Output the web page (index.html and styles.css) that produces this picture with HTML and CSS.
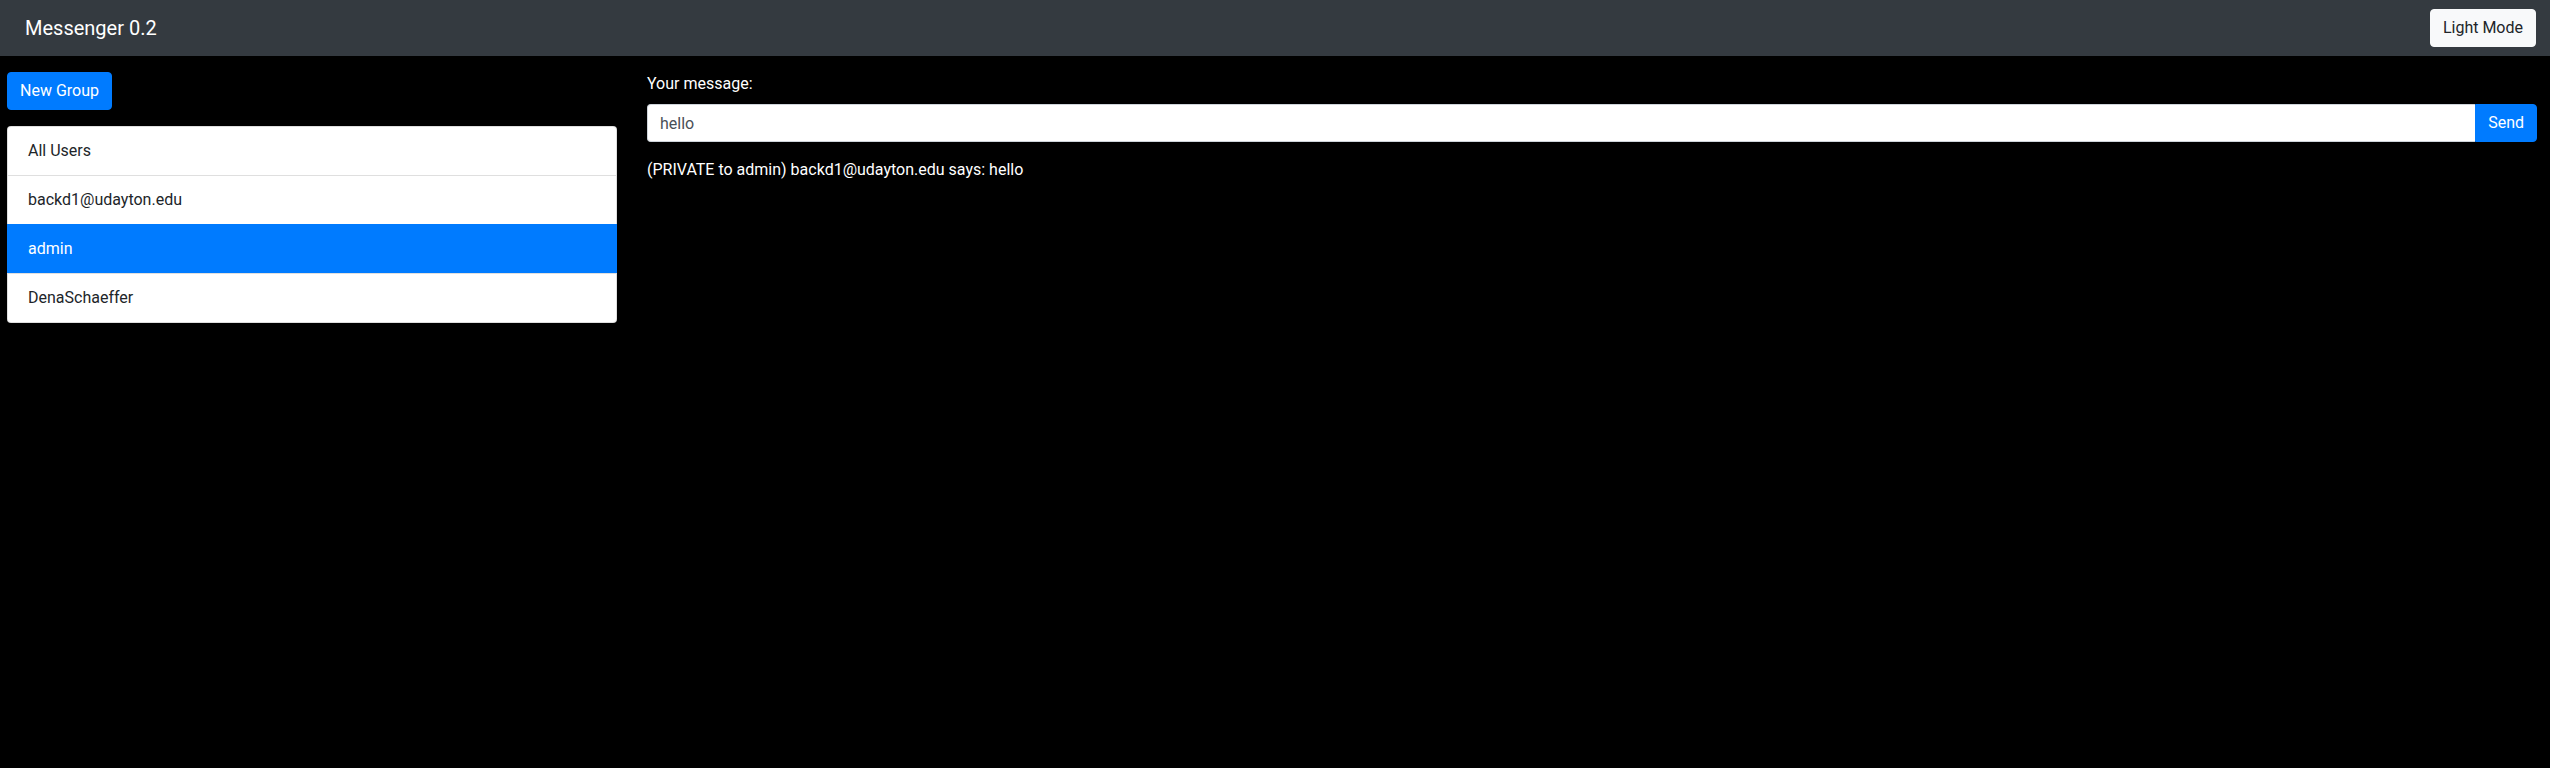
FILE: index.html
```html
<!DOCTYPE html>
<html lang="en">
<head>
<meta charset="utf-8">
<title>Messenger 0.2</title>
<link rel="stylesheet" href="styles.css">
</head>
<body>
<nav class="navbar">
  <span class="brand">Messenger 0.2</span>
  <button class="btn btn-light" type="button">Light Mode</button>
</nav>
<main class="layout">
  <aside class="sidebar">
    <button class="btn btn-primary" type="button">New Group</button>
    <ul class="list-group">
      <li class="list-item">All Users</li>
      <li class="list-item">backd1@udayton.edu</li>
      <li class="list-item active">admin</li>
      <li class="list-item">DenaSchaeffer</li>
    </ul>
  </aside>
  <section class="chat">
    <label class="label" for="msg">Your message:</label>
    <div class="input-group">
      <input id="msg" class="form-control" type="text" value="hello">
      <button class="btn btn-primary btn-append" type="button">Send</button>
    </div>
    <div class="messages">
      <p class="message">(PRIVATE to admin) backd1@udayton.edu says: hello</p>
    </div>
  </section>
</main>
</body>
</html>
```
FILE: styles.css
```css
* { box-sizing: border-box; }
html, body { margin: 0; padding: 0; }
body {
  background: #000;
  color: #fff;
  font-family: Roboto, "Liberation Sans", sans-serif;
  font-size: 16px;
  line-height: 1.5;
  width: 2550px;
  height: 768px;
}
.navbar {
  height: 56px;
  background: #343a40;
  display: flex;
  align-items: center;
  justify-content: space-between;
  padding: 0 14px 0 25px;
}
.brand {
  font-size: 20px;
  line-height: 30px;
  color: #fff;
}
.btn {
  font-family: inherit;
  font-size: 16px;
  line-height: 24px;
  padding: 6px 12px;
  border: 1px solid transparent;
  border-radius: 4px;
  height: 38px;
  cursor: pointer;
}
.btn-light {
  background: #f8f9fa;
  border-color: #f8f9fa;
  color: #212529;
}
.btn-primary {
  background: #007bff;
  border-color: #007bff;
  color: #fff;
}
.layout {
  display: grid;
  grid-template-columns: 610px 1fr;
  column-gap: 30px;
  padding: 16px 13px 0 7px;
}
.sidebar {
  display: flex;
  flex-direction: column;
  align-items: flex-start;
  gap: 16px;
}
.list-group {
  list-style: none;
  margin: 0;
  padding: 0;
  width: 100%;
  display: flex;
  flex-direction: column;
}
.list-item {
  background: #fff;
  color: #212529;
  padding: 12px 20px;
  border: 1px solid rgba(0,0,0,.125);
  margin-top: -1px;
}
.list-item:first-child {
  margin-top: 0;
  border-top-left-radius: 4px;
  border-top-right-radius: 4px;
}
.list-item:last-child {
  border-bottom-left-radius: 4px;
  border-bottom-right-radius: 4px;
}
.list-item.active {
  background: #007bff;
  border-color: #007bff;
  color: #fff;
}
.chat {
  display: flex;
  flex-direction: column;
}
.label {
  display: block;
  margin-bottom: 8px;
}
.input-group {
  display: flex;
  width: 100%;
}
.form-control {
  flex: 1;
  height: 38px;
  padding: 6px 12px;
  font-family: inherit;
  font-size: 16px;
  line-height: 24px;
  color: #495057;
  background: #fff;
  border: 1px solid #ced4da;
  border-right: 0;
  border-radius: 4px 0 0 4px;
  outline: none;
}
.btn-append {
  border-radius: 0 4px 4px 0;
}
.messages {
  margin-top: 16px;
}
.message {
  margin: 0;
}
```
